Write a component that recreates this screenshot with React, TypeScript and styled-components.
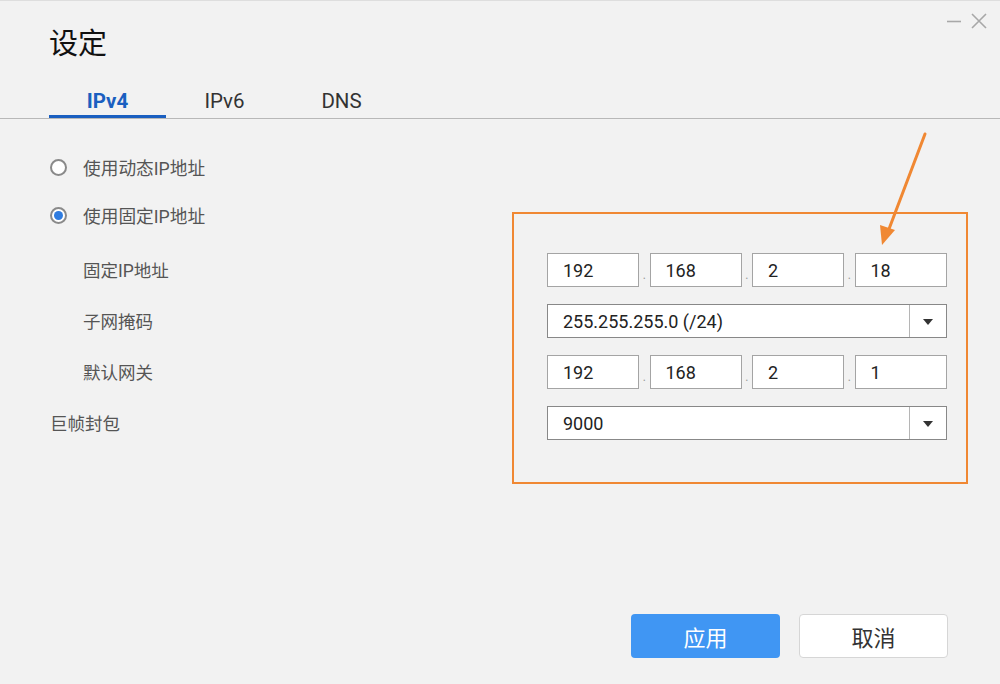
import { createGlobalStyle } from "styled-components";
import styled from "styled-components";
import { Fragment } from "react";

const GlobalStyle = createGlobalStyle`
  html, body {
    margin: 0;
    padding: 0;
    background: #f2f2f2;
  }
  * {
    box-sizing: border-box;
  }
`;

const FONT = `"Roboto", "Noto Sans CJK SC", sans-serif`;
const ORANGE = "#f08833";

const Window = styled.div`
  position: relative;
  width: 1000px;
  height: 684px;
  overflow: hidden;
  background: #f2f2f2;
  border-top: 1px solid #dedede;
  font-family: ${FONT};
  display: flex;
  flex-direction: column;
`;

const Header = styled.div`
  display: flex;
  justify-content: space-between;
  align-items: flex-start;
  padding: 0 12px 0 49px;
  height: 84px;
`;

const Title = styled.h1`
  margin: 26px 0 0;
  font-size: 29px;
  line-height: 34px;
  font-weight: 400;
  color: #111;
`;

const Controls = styled.div`
  display: flex;
  align-items: center;
  gap: 8px;
  margin-top: 11px;
`;

const TabBar = styled.div`
  display: flex;
  padding-left: 49px;
  border-bottom: 1px solid #b8b8b8;
`;

const Tab = styled.div<{ $active?: boolean }>`
  width: 117px;
  height: 33px;
  display: flex;
  align-items: center;
  justify-content: center;
  padding-top: 2px;
  font-size: 20.5px;
  font-weight: ${(p) => (p.$active ? 700 : 400)};
  color: ${(p) => (p.$active ? "#1a5fc0" : "#333")};
  border-bottom: 3px solid ${(p) => (p.$active ? "#1a5fc0" : "transparent")};
`;

const Content = styled.div`
  flex: 1;
  display: flex;
  padding: 0 32px 0 50px;
`;

const LeftColumn = styled.div`
  flex: 1;
  padding-top: 24px;
  display: flex;
  flex-direction: column;
`;

const RadioRow = styled.label`
  height: 48px;
  display: flex;
  align-items: center;
  gap: 16px;
  font-size: 17.7px;
  color: #555;
`;

const Radio = styled.span<{ $checked?: boolean }>`
  width: 17px;
  height: 17px;
  border-radius: 50%;
  border: 2px solid #8a8a8a;
  background: #fff;
  display: flex;
  align-items: center;
  justify-content: center;
  &::after {
    content: "";
    width: 9px;
    height: 9px;
    border-radius: 50%;
    background: ${(p) => (p.$checked ? "#2f7ce0" : "transparent")};
  }
`;

const Spacer = styled.div`
  height: 5px;
`;

const LabelRow = styled.div<{ $indent?: boolean }>`
  height: 51px;
  display: flex;
  align-items: center;
  padding-left: ${(p) => (p.$indent ? "33px" : "0")};
  font-size: 17.5px;
  color: #555;
`;

const AnnotBox = styled.div`
  width: 456px;
  height: 272px;
  margin-top: 93px;
  border: 2px solid ${ORANGE};
  padding: 39px 0 0 33px;
  display: flex;
  flex-direction: column;
  gap: 17px;
`;

const IpRow = styled.div`
  display: flex;
  align-items: stretch;
  height: 34px;
`;

const Octet = styled.div`
  width: 92px;
  background: #fff;
  border: 1px solid #a4a4a4;
  display: flex;
  align-items: center;
  padding-left: 15px;
  font-size: 18px;
  color: #222;
`;

const Dot = styled.span`
  width: 10.5px;
  display: flex;
  align-items: flex-end;
  justify-content: center;
  padding-bottom: 6px;
  font-size: 12px;
  line-height: 1;
  color: #999;
`;

const Select = styled.div`
  width: 400px;
  height: 34px;
  background: #fff;
  border: 1px solid #888;
  display: flex;
  align-items: stretch;
`;

const SelectValue = styled.div`
  flex: 1;
  display: flex;
  align-items: center;
  padding-left: 15px;
  font-size: 18px;
  color: #222;
`;

const SelectArrow = styled.div`
  width: 37px;
  border-left: 1px solid #b5b5b5;
  display: flex;
  align-items: center;
  justify-content: center;
  &::after {
    content: "";
    border-left: 5px solid transparent;
    border-right: 5px solid transparent;
    border-top: 6px solid #333;
    margin-top: 2px;
  }
`;

const Footer = styled.div`
  display: flex;
  justify-content: flex-end;
  gap: 19px;
  padding: 0 52px 26px 0;
`;

const Button = styled.button<{ $primary?: boolean }>`
  width: 149px;
  height: 44px;
  border-radius: 4px;
  font-family: ${FONT};
  font-size: 22px;
  cursor: pointer;
  background: ${(p) => (p.$primary ? "#4096f3" : "#fff")};
  color: ${(p) => (p.$primary ? "#fff" : "#333")};
  border: ${(p) => (p.$primary ? "none" : "1px solid #d6d6d6")};
`;

const ArrowOverlay = styled.svg`
  position: absolute;
  left: 0;
  top: 0;
  pointer-events: none;
`;

function Octets({ values }: { values: string[] }) {
  return (
    <IpRow>
      {values.map((v, i) => (
        <Fragment key={i}>
          {i > 0 && <Dot>.</Dot>}
          <Octet>{v}</Octet>
        </Fragment>
      ))}
    </IpRow>
  );
}

function Dropdown({ value }: { value: string }) {
  return (
    <Select>
      <SelectValue>{value}</SelectValue>
      <SelectArrow />
    </Select>
  );
}

export default function App() {
  return (
    <>
      <GlobalStyle />
      <Window>
        <Header>
          <Title>设定</Title>
          <Controls>
            <svg width="16" height="18" viewBox="0 0 16 18">
              <line x1="1" y1="9.5" x2="15" y2="9.5" stroke="#a8a8a8" strokeWidth="1.6" />
            </svg>
            <svg width="18" height="18" viewBox="0 0 18 18">
              <path d="M2 2 L16 16 M16 2 L2 16" stroke="#a8a8a8" strokeWidth="1.6" fill="none" />
            </svg>
          </Controls>
        </Header>
        <TabBar>
          <Tab $active>IPv4</Tab>
          <Tab>IPv6</Tab>
          <Tab>DNS</Tab>
        </TabBar>
        <Content>
          <LeftColumn>
            <RadioRow>
              <Radio />
              使用动态IP地址
            </RadioRow>
            <RadioRow>
              <Radio $checked />
              使用固定IP地址
            </RadioRow>
            <Spacer />
            <LabelRow $indent>固定IP地址</LabelRow>
            <LabelRow $indent>子网掩码</LabelRow>
            <LabelRow $indent>默认网关</LabelRow>
            <LabelRow>巨帧封包</LabelRow>
          </LeftColumn>
          <AnnotBox>
            <Octets values={["192", "168", "2", "18"]} />
            <Dropdown value="255.255.255.0 (/24)" />
            <Octets values={["192", "168", "2", "1"]} />
            <Dropdown value="9000" />
          </AnnotBox>
        </Content>
        <Footer>
          <Button $primary>应用</Button>
          <Button>取消</Button>
        </Footer>
        <ArrowOverlay width="1000" height="684" viewBox="0 0 1000 684">
          <line x1="925" y1="133" x2="889" y2="228" stroke={ORANGE} strokeWidth="3" strokeLinecap="round" />
          <polygon points="882,244 880,224 895,229" fill={ORANGE} />
        </ArrowOverlay>
      </Window>
    </>
  );
}
